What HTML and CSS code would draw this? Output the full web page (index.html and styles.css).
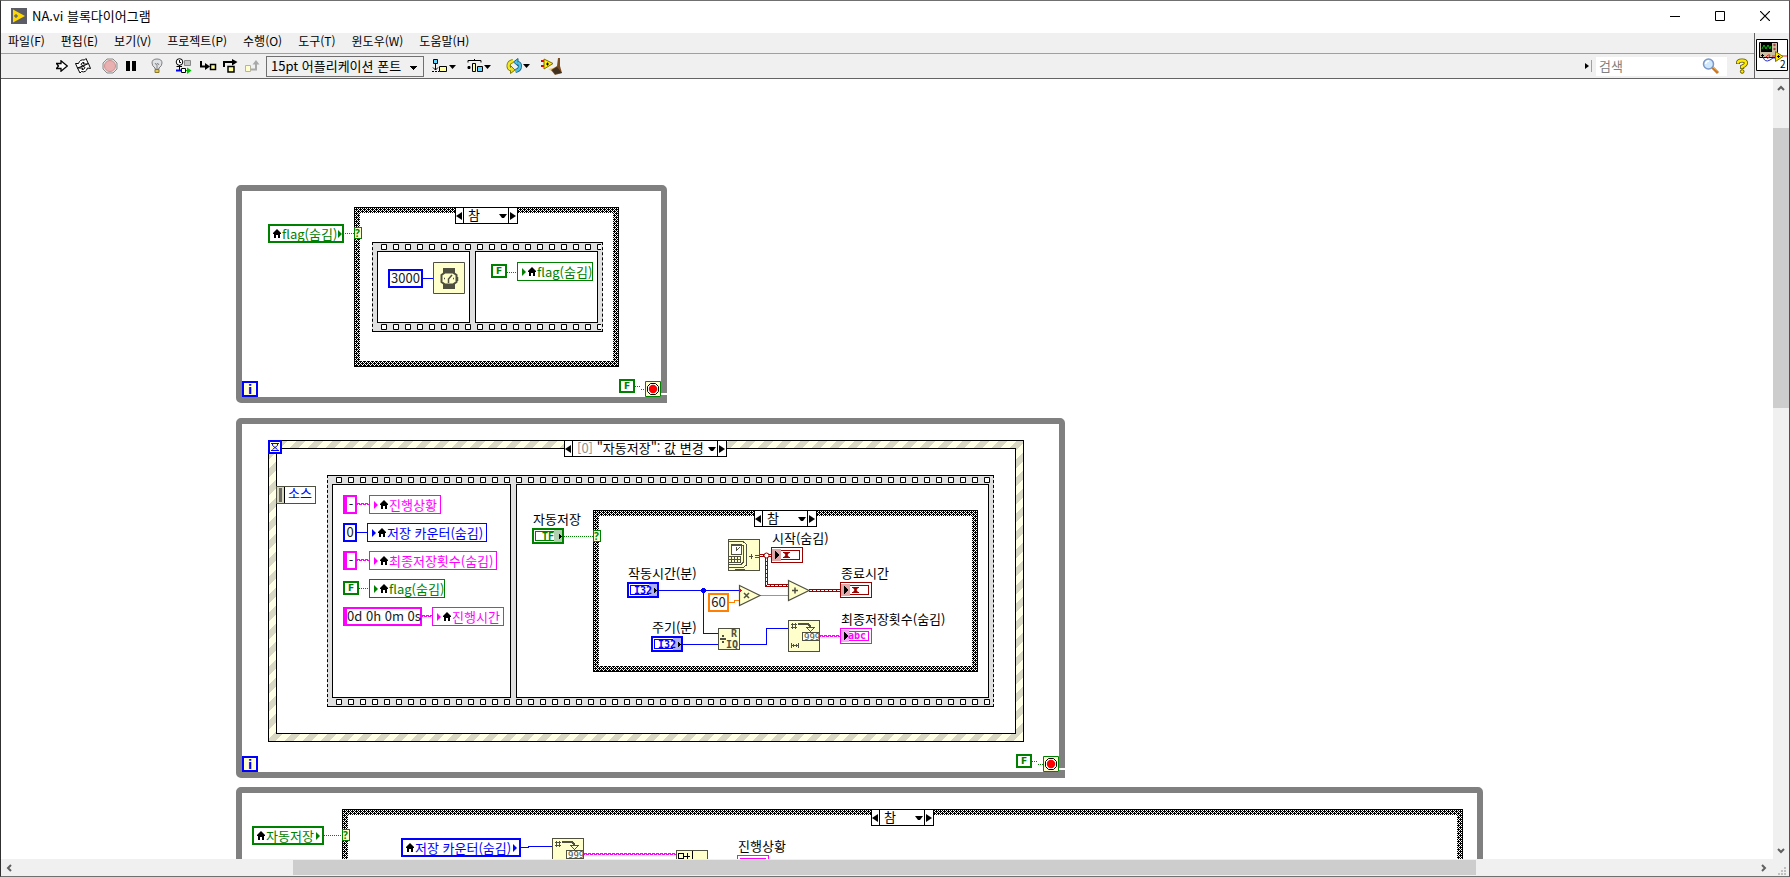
FILE: index.html
```html
<!DOCTYPE html>
<html lang="ko">
<head>
<meta charset="utf-8">
<title>NA.vi 블록다이어그램</title>
<link rel="stylesheet" href="styles.css">
</head>
<body>
<svg class="defs" aria-hidden="true">
  <defs>
    <symbol id="house" viewBox="0 0 8 9"><path d="M4 0L8 4V5H7V9H5V6H3V9H1V5H0V4Z" fill="#000"/></symbol>
    <symbol id="tri-r" viewBox="0 0 4 8"><path d="M0 0L4 4L0 8Z" fill="currentColor"/></symbol>
    <symbol id="case-l" viewBox="0 0 6 8"><path d="M6 0V8L0 4Z" fill="#000"/></symbol>
    <symbol id="case-r" viewBox="0 0 6 8"><path d="M0 0V8L6 4Z" fill="#000"/></symbol>
    <symbol id="drop" viewBox="0 0 8 4"><path d="M0 0H8L5 4H3Z" fill="#000"/></symbol>
    <symbol id="stop" viewBox="0 0 16 16"><path d="M.5 .5H15.5V15.5H.5Z" fill="#ffffcc" stroke="#008000"/><path d="M5.500 2.500H10.500L13.500 5.500V10.500L10.500 13.500H5.500L2.500 10.500V5.500Z" fill="#fff" stroke="#000"/><circle cx="8" cy="8" r="4.200" fill="#f00"/></symbol>
    <symbol id="fmt" viewBox="0 0 32 32"><path d="M.5 .5H31.500V31.500H.5Z" fill="#ffffcc" stroke="#505040"/><path d="M4.500 3V9M7.500 3V9M3 4.500H9M3 7.500H9" stroke="#505040" fill="none"/><path d="M10 4H19Q22 4 22.500 8" stroke="#505040" stroke-width="2" fill="none"/><path d="M18.500 7.500H26.500L22.500 11.500Z" fill="#ffffcc" stroke="#505040"/><path d="M14.500 12.500H31.500V20.500H14.500Z" fill="#fff" stroke="#505040"/><path d="M3.500 23V28M10.500 23V28M4 25.500H10M5.500 24V27M8.500 24V27" stroke="#505040" fill="none"/></symbol>
    <pattern id="film" width="12" height="6" patternUnits="userSpaceOnUse"><path d="M.5 .5H5.500V5.500H.5Z" fill="#fff" stroke="#000"/></pattern>
  </defs>
</svg>

<div class="window">
  <header class="titlebar">
    <svg class="app-icon" width="16" height="16" viewBox="0 0 16 16"><path d="M0 0H16V16H0Z" fill="#5c5c66"/><path d="M2 1.500L14 8L2 14.500Z" fill="#ffd800"/><path d="M3 8H7M5 6V10" stroke="#3c4a8c"/></svg>
    <h1 class="title">NA.vi 블록다이어그램</h1>
    <div class="winbtns">
      <button class="winbtn" aria-label="최소화"><svg width="10" height="10"><path d="M0 5.500H10" stroke="#000"/></svg></button>
      <button class="winbtn" aria-label="최대화"><svg width="10" height="10"><path d="M.5 .5H9.500V9.500H.5Z" fill="none" stroke="#000"/></svg></button>
      <button class="winbtn" aria-label="닫기"><svg width="10" height="10"><path d="M0 0L10 10M10 0L0 10" stroke="#000" stroke-width="1.200"/></svg></button>
    </div>
  </header>

  <div class="head">
    <div class="bars">
      <nav class="menubar">
        <button class="menu">파일(F)</button><button class="menu">편집(E)</button><button class="menu">보기(V)</button><button class="menu">프로젝트(P)</button><button class="menu">수행(O)</button><button class="menu">도구(T)</button><button class="menu">윈도우(W)</button><button class="menu">도움말(H)</button>
      </nav>
      <div class="toolbar">
        <button class="tool" aria-label="실행"><svg width="12" height="12"><path d="M.5 3.500H5V.800L11.300 6L5 11.200V8.500H.5L2.500 6Z" fill="#fff" stroke="#000" stroke-width="1.300"/></svg></button>
        <button class="tool g7" aria-label="반복 실행"><svg width="16" height="16" fill="#fff" stroke="#000"><path d="M3.500 5.500Q5 1 9.500 2L11 .5L13.500 6H8.500L9 4.500Q7 4 6 6.500L8 8L2.500 10L.500 5.500Z"/><path d="M12.500 10Q11 15 6.500 13.500L5 15L2.500 10L7.500 10L7 11.500Q9 12 10 9.500L8 8L13.500 5.500L15.500 10.500Z"/></svg></button>
        <button class="tool g11" aria-label="중단"><svg width="16" height="16"><path d="M5 1H11L15 5V11L11 15H5L1 11V5Z" fill="#e4e4e4" stroke="#8c8c8c"/><circle cx="8" cy="8" r="5.500" fill="#e8b0b0" stroke="#d09090"/></svg></button>
        <button class="tool g8" aria-label="일시정지"><svg width="10" height="12"><path d="M0 1H4V11H0ZM6 1H10V11H6Z" fill="#000"/></svg></button>
        <button class="tool g15" aria-label="실행 하이라이트"><svg width="12" height="16"><path d="M4 10Q1 8 1 5Q1 1 6 1Q11 1 11 5Q11 8 8 10V11H4Z" fill="#dfe2e6" stroke="#808080"/><path d="M4 5L5.500 7L6.500 5L8 7M6 7V10" stroke="#888" fill="none"/><path d="M4 11.500H8V14.500H4Z" fill="#e0c850" stroke="#887830"/></svg></button>
        <button class="tool g12" aria-label="와이어 값 유지"><svg width="17" height="16"><circle cx="4.500" cy="4" r="3.300" fill="#fff" stroke="#000"/><path d="M4.500 2V4.500H6M4.500 7V12M1.500 8.500H7" stroke="#000" fill="none"/><path d="M9.500 2.500H15.500V7.500H9.500Z" fill="#c4c4c4" stroke="#888"/><path d="M1 12.500H6" stroke="#00f" stroke-width="2"/><path d="M6.500 10.500H10.500V14.500H6.500Z" fill="#fff" stroke="#000"/><path d="M11 12.500H13" stroke="#0a0"/><path d="M12 9.500L16.500 12.500L12 16Z" fill="#00c000"/></svg></button>
        <button class="tool g8" aria-label="들어가기"><svg width="17" height="14"><path d="M1 2V7.500H6" stroke="#000" stroke-width="2" fill="none"/><path d="M5 4L10 7.500L5 11Z" fill="#000"/><path d="M10.500 5.500H15.500V10.500H10.500Z" fill="#ffff9c" stroke="#000" stroke-width="1.500"/></svg></button>
        <button class="tool g6" aria-label="건너뛰기"><svg width="15" height="14"><path d="M1 8V3H10" stroke="#000" stroke-width="2" fill="none"/><path d="M9 0L14.500 3L9 6.500Z" fill="#000"/><path d="M5 7.500H11V13H5Z" fill="#ffff9c" stroke="#000" stroke-width="1.500"/></svg></button>
        <button class="tool g6" aria-label="나가기"><svg width="16" height="14"><path d="M1.500 6.500H6.500V12.500H1.500Z" fill="#ffffd0" stroke="#b4b4a0"/><path d="M7 10.500H12V5" stroke="#a8a8a8" stroke-width="2" fill="none"/><path d="M8.500 5.500L12 1L15.500 5.500Z" fill="#a8a8a8"/></svg></button>
        <select class="font-select" aria-label="텍스트 설정"><option>15pt 어플리케이션 폰트</option></select>
        <button class="tool g8" aria-label="객체 정렬"><svg width="24" height="14"><path d="M1.500 .5H5.500V4.500H1.500Z" fill="#60d8ff" stroke="#000"/><path d="M3.500 5V11M1 8.500L3.500 11L6 8.500" stroke="#000" fill="none"/><path d="M0 12.500H7" stroke="#000" stroke-dasharray="2 1"/><path d="M7.500 7.500H14.500V12.500H7.500Z" fill="#ffffa0" stroke="#000"/><path d="M17 6H24L20.500 10Z" fill="#000"/></svg></button>
        <button class="tool g11" aria-label="객체 분배"><svg width="24" height="14"><path d="M1 3.500V1.500H14V3.500M7.500 1V0" stroke="#000" fill="none"/><path d="M1 7.500H3V9.500H1Z" stroke="#000"/><path d="M5.500 4.500H8.500V12.500H5.500Z" fill="#ffffa0" stroke="#000"/><path d="M10.500 7.500H15.500V12.500H10.500Z" fill="#60d8ff" stroke="#000"/><path d="M17 6H24L20.500 10Z" fill="#000"/></svg></button>
        <button class="tool g14" aria-label="순서 재설정"><svg width="25" height="16" fill="none"><path d="M8 3Q3.500 4 3.500 8Q3.500 10.500 6 11.500" stroke="#807800" stroke-width="4"/><path d="M5.500 7.500L10 12L5.500 15.500Z" fill="#e8e020" stroke="#807800"/><path d="M8 3Q3.500 4 3.500 8Q3.500 10.500 6 11.500" stroke="#f0e828" stroke-width="2.400"/><path d="M10.500 13Q15 12 15 8Q15 5.500 12.500 4.500" stroke="#186088" stroke-width="4"/><path d="M13 .5V8L8.500 4Z" fill="#50c0e0" stroke="#186088"/><path d="M10.500 13Q15 12 15 8Q15 5.500 12.500 4.500" stroke="#50c0e0" stroke-width="2.400"/><path d="M18 6H25L21.500 10Z" fill="#000"/></svg></button>
        <button class="tool g11" aria-label="다이어그램 정리"><svg width="22" height="17"><path d="M0 3H3M0 8H3" stroke="#e00000" stroke-width="2"/><path d="M7 11L14 9.500L16 13L12 14Z" fill="#f0c878"/><path d="M3 1L12 5.500L3 11Z" fill="#fff000" stroke="#806800"/><path d="M5 6H8M6.500 4.500V7.500" stroke="#000"/><path d="M17 0H19V8L21 15L14 17L10 12L16 8Z" fill="#7c4c20"/><path d="M11 12L16 9L21 15L14 16Z" fill="#403020"/></svg></button>
        <div class="searchbox">
          <svg width="8" height="12"><path d="M1 3L5 6L1 9Z" fill="#000"/><path d="M7.500 0V12" stroke="#a0a0a0"/></svg>
          <label class="search"><input class="search-input" type="text" placeholder="검색" aria-label="검색"><svg width="18" height="17"><path d="M10 9L16 15" stroke="#c87828" stroke-width="3"/><path d="M11 9L17 14" stroke="#f4b860" stroke-width="1"/><circle cx="6.500" cy="6" r="5" fill="#d0e8fc" stroke="#7c98c8" stroke-width="1.500"/><path d="M3.500 6Q4 3 7 3" stroke="#fff" stroke-width="1.500" fill="none"/></svg></label>
          <button class="tool" aria-label="도움말"><svg width="12" height="16"><path d="M2 6V5Q2 2.500 6 2.500Q10 2.500 10 5Q10 7 6.200 8.500V11" stroke="#5c5400" stroke-width="4" fill="none"/><path d="M2 5.500V5Q2 2.500 6 2.500Q10 2.500 10 5Q10 7 6.200 8.500V10.300" stroke="#ffec00" stroke-width="2.400" fill="none"/><circle cx="6.200" cy="13.500" r="1.800" fill="#ffec00" stroke="#5c5400"/></svg></button>
        </div>
      </div>
    </div>
    <div class="vi-icon">
      <svg width="32" height="32" viewBox="0 0 32 32"><path d="M.5 .5H31.500V31.500H.5Z" fill="#fff" stroke="#000"/><path d="M3.500 3.500H21.500V18.500H3.500Z" fill="#c8c0a0" stroke="#000"/><path d="M5 4H16V13H5Z" fill="#000"/><path d="M6 10L8 6L10 10L12 6L14 10L15 7" stroke="#00c000" fill="none"/><circle cx="18.500" cy="6" r="1.200" fill="#a04040"/><circle cx="18.500" cy="10" r="1.200" fill="#a04040"/><path d="M5 16.500H8M6.500 15V18" stroke="#000"/><path d="M7 18Q9 24 14 21Q17 18 20 19" stroke="#2030c0" fill="none"/><path d="M10 18Q12 15 14 16Q12 21 11 19M16 17H31" stroke="#f02020" fill="none"/><path d="M19.500 12.500L27 17.500L19.500 22.500Z" fill="#ffe800" stroke="#807000"/><path d="M21 17.500H24M22.500 16V19" stroke="#000"/><text class="vi-num" x="24" y="29">2</text></svg>
    </div>
  </div>

  <div class="workarea">
    <main class="canvas">
      <div class="sheet">
        <section class="loop loop-a"></section>
        <section class="loop loop-b"></section>
        <section class="loop loop-c"></section>
        <div class="case case-a"></div>
        <div class="event"></div>
        <div class="seq seq-a"><div class="frame fa1"></div><div class="frame fa2"></div></div>
        <div class="seq seq-b"><div class="frame fb1"></div><div class="frame fb2"></div></div>
        <div class="case case-b"></div>
        <div class="case case-c"></div>

        <svg class="wires" width="1790" height="877" shape-rendering="crispEdges" fill="none">
          <g class="films">
            <svg x="381" y="244" width="220" height="6"><rect width="220" height="6" fill="url(#film)"/></svg>
            <svg x="381" y="324" width="220" height="6"><rect width="220" height="6" fill="url(#film)"/></svg>
            <svg x="336" y="477" width="654" height="6"><rect width="654" height="6" fill="url(#film)"/></svg>
            <svg x="336" y="699" width="654" height="6"><rect width="654" height="6" fill="url(#film)"/></svg>
          </g>
          <path d="M660 394H668M1058 769H1066" stroke="#fff" stroke-width="2"/>
          <g stroke="#008000" stroke-dasharray="1 1">
            <path d="M345 233.500H354M507 272.500H517M635 386.500H641M641 389.500H645M359 588.500H369M564 536.500H593M1032 761.500H1038M1038 764.500H1043M324 835.500H342"/>
          </g>
          <g stroke="#0000ff">
            <path d="M423 278.500H433M357 532.500H367M659 590.500H739M703.500 590V633.500H718M683 644.500H718M740 644.500H766.500V628.500H788M521 847.500H528V846.500H552"/>
          </g>
          <circle cx="703.500" cy="590.500" r="2.500" fill="#0000ff"/>
          <g stroke="#ff8000"><path d="M729 602.500H734.500V600.500H739M760 595.500H788"/></g>
          <g stroke="#ff00ff" stroke-dasharray="3 1">
            <path d="M357 503.500H369M357 559.500H369M422 615.500H432M820 635.500H840M584 853.500H676"/>
            <path stroke-dashoffset="2" d="M357 504.500H369M357 560.500H369M422 616.500H432M820 636.500H840M584 854.500H676"/>
          </g>
          <g stroke="#990000" stroke-width="3"><path d="M760 555.500H771M766.500 555V585.500H788M809 590.500H840"/></g>
          <g stroke="#fff" stroke-dasharray="3 1"><path d="M760 555.500H771M766.500 558V585.500H788M809 590.500H840"/></g>
          <circle cx="766.500" cy="555.500" r="2.500" fill="#fff" stroke="#990000" shape-rendering="auto"/>

          <g fill="#ffffcc" stroke="#008000"><path d="M354.500 227.500H361.500V238.500H354.500Z"/><path d="M593.500 530.500H600.500V541.500H593.500Z"/><path d="M342.500 829.500H349.500V840.500H342.500Z"/></g>
          <g class="tiny green"><text x="355" y="237">?</text><text x="594" y="540">?</text><text x="343" y="839">?</text></g>

          <!-- wait -->
          <g shape-rendering="auto"><path d="M433.500 262.500H464.500V293.500H433.500Z" fill="#ffffcc" stroke="#505040"/><path d="M443 268H455V274H443ZM443 283H455V289H443Z" fill="#505040"/><path d="M445 272.500H453L456.500 275V282L453 284.500H445L441.500 282V275Z" fill="#ffffcc" stroke="#505040" stroke-width="2"/><path d="M448.500 283V279L452 275M457.500 277V281M444 278.500H445M453 278.500H454" stroke="#505040" stroke-width="1.500"/></g>

          <!-- loop stop and iteration terminals -->
          <g shape-rendering="auto"><use href="#stop" x="645" y="381" width="16" height="16"/><use href="#stop" x="1043" y="756" width="16" height="16"/></g>
          <g fill="#ffffcc" stroke="#0000ff" stroke-width="2"><path d="M243 382H257V396H243Z"/><path d="M243 757H257V771H243Z"/><path d="M269 441H281V453H269Z"/></g>
          <g class="iter"><text x="248" y="394">i</text><text x="248" y="769">i</text></g>
          <path d="M271 443.500H279M271 450.500H279M272.500 444V445.500L277.500 449.500M277.500 444V445.500L272.500 449.500" stroke="#0000ff" shape-rendering="auto"/>

          <!-- event data node -->
          <path d="M276.500 486.500H315.500V503.500H276.500Z" fill="#fff" stroke="#505040"/><path d="M277 487H284V503H277Z" fill="#d8d8c0"/><path d="M279 488H282V502H279Z" fill="#6c6864"/><path d="M284.500 487V503" stroke="#000"/>

          <!-- get date/time -->
          <path d="M728.500 539.500H759.500V570.500H728.500Z" fill="#ffffcc" stroke="#505040"/>
          <g stroke="#505040"><path d="M729 541.500H743L746.500 544.500V565L743 567.500H729M729 564.500H741L743.500 562V546L741 544.500H731"/><path d="M731.500 545.500H741.500V554.500H731.500Z" fill="#fff"/><path d="M736.500 547V551M737 550L740 547M729 556.500H740M729 559.500H740M729 562.500H740M731.500 556V563M734.500 556V563M737.500 556V563M740.500 556V563M735 569.500H745M749 556.500H753M751.500 554V559M755 555.500H759M755 557.500H759"/></g>

          <!-- arithmetic -->
          <g shape-rendering="auto" fill="#ffffcc" stroke="#505040" stroke-width="1.200"><path d="M739.500 585.500L760 595.500L739.500 605.500Z"/><path d="M788.500 580.500L809 590.500L788.500 600.500Z"/><path d="M744 593L749 598M749 593L744 598M792 590.500H798M795 587.500V593.500" stroke-width="1.500"/></g>
          <path d="M739 588L742 590.500L739 593Z" fill="#ff0000"/>
          <path d="M718.500 628.500H739.500V649.500H718.500Z" fill="#ffffcc" stroke="#505040"/>
          <path d="M720 639H726M722 636H724M722 642H724" stroke="#505040" stroke-width="2"/>
          <g class="code olive"><text x="731" y="637">R</text><text x="726" y="648">IQ</text></g>

          <!-- number to string -->
          <use href="#fmt" x="788" y="620" width="32" height="32"/>
          <use href="#fmt" x="552" y="838" width="32" height="32"/>
          <g class="code-sm olive"><text x="804" y="640">999</text><text x="568" y="858">999</text></g>
          <path d="M676.500 850.500H707.500V881.500H676.500Z" fill="#ffffcc" stroke="#505040"/><path d="M678.500 853.500H683.500V858.500H678.500ZM684 856.500H690M687.500 853V860M692.500 851V877" stroke="#000"/>

          <!-- control and indicator terminals -->
          <g stroke="#008000"><path d="M533 529H563V543H533Z" stroke-width="2" fill="#fff"/><path d="M535.500 531.500H561.500V540.500H535.500Z"/></g>
          <path d="M554 530H562V542H554Z" fill="#b0d0b0"/><path d="M559 533V540L562 536.500Z" fill="#000"/>
          <g stroke="#0000ff"><path d="M628 583H658V597H628Z" stroke-width="2" fill="#fff"/><path d="M630.500 585.500H656.500V594.500H630.500Z"/><path d="M652 637H682V651H652Z" stroke-width="2" fill="#fff"/><path d="M654.500 639.500H680.500V648.500H654.500Z"/></g>
          <path d="M649 584H657V596H649ZM673 638H681V650H673Z" fill="#b0b0f8"/><path d="M654 587V594L657 590.500ZM678 641V648L681 644.500Z" fill="#000"/>
          <g stroke="#990000" fill="#fff"><path d="M771.500 547.500H802.500V562.500H771.500Z"/><path d="M774.500 550.500H799.500V559.500H774.500Z"/><path d="M840.500 582.500H871.500V597.500H840.500Z"/><path d="M843.500 585.500H868.500V594.500H843.500Z"/></g>
          <path d="M772 549H781V561H772ZM841 584H850V596H841Z" fill="#e0a8a8"/><path d="M775 551V559L779 555ZM844 586V594L848 590Z" fill="#000"/>
          <path d="M783 552H790V553H789L787.500 555L789 557H790V558H783V557H784L785.500 555L784 553H783ZM852 587H859V588H858L856.500 590L858 592H859V593H852V592H853L854.500 590L853 588H852Z" fill="#990000" shape-rendering="auto"/>
          <g stroke="#ff00ff" fill="#fff"><path d="M840.500 628.500H871.500V643.500H840.500Z"/><path d="M843.500 631.500H868.500V640.500H843.500Z"/><path d="M737.500 855.500H768.500V870.500H737.500Z"/><path d="M740.500 858.500H765.500V867.500H740.500Z"/></g>
          <path d="M841 630H849V642H841Z" fill="#f8a8f8"/><path d="M844 632V640L848 636Z" fill="#000"/>
          <g class="code"><text class="green" x="542" y="540">TF</text><text class="blue" x="634" y="594">I32</text><text class="blue" x="658" y="648">I32</text><text class="pink" x="848" y="639">abc</text></g>
        </svg>

        <button class="selector sel-a"><svg class="end" width="6" height="8"><use href="#case-l"/></svg><span class="sel-text">참</span><svg class="drop" width="8" height="4"><use href="#drop"/></svg><svg class="end last" width="6" height="8"><use href="#case-r"/></svg></button>
        <button class="selector sel-b"><svg class="end" width="6" height="8"><use href="#case-l"/></svg><span class="sel-text"><span class="dim">[0]</span> "자동저장": 값 변경</span><svg class="drop" width="8" height="4"><use href="#drop"/></svg><svg class="end last" width="6" height="8"><use href="#case-r"/></svg></button>
        <button class="selector sel-c"><svg class="end" width="6" height="8"><use href="#case-l"/></svg><span class="sel-text">참</span><svg class="drop" width="8" height="4"><use href="#drop"/></svg><svg class="end last" width="6" height="8"><use href="#case-r"/></svg></button>
        <button class="selector sel-d"><svg class="end" width="6" height="8"><use href="#case-l"/></svg><span class="sel-text">참</span><svg class="drop" width="8" height="4"><use href="#drop"/></svg><svg class="end last" width="6" height="8"><use href="#case-r"/></svg></button>

        <div class="local read green n-flag-read"><svg width="8" height="9"><use href="#house"/></svg><span class="txt">flag(숨김)</span><svg class="out" width="4" height="8"><use href="#tri-r"/></svg></div>
        <div class="local read green n-auto-read"><svg width="8" height="9"><use href="#house"/></svg><span class="txt">자동저장</span><svg class="out" width="4" height="8"><use href="#tri-r"/></svg></div>
        <div class="local read blue n-count-read"><svg width="8" height="9"><use href="#house"/></svg><span class="txt">저장 카운터(숨김)</span><svg class="out" width="4" height="8"><use href="#tri-r"/></svg></div>

        <div class="local green n-flag-a"><svg width="4" height="8"><use href="#tri-r"/></svg><svg class="home" width="8" height="9"><use href="#house"/></svg><span class="txt">flag(숨김)</span></div>
        <div class="local pink n-status"><svg width="4" height="8"><use href="#tri-r"/></svg><svg class="home" width="8" height="9"><use href="#house"/></svg><span class="txt">진행상황</span></div>
        <div class="local blue n-count"><svg width="4" height="8"><use href="#tri-r"/></svg><svg class="home" width="8" height="9"><use href="#house"/></svg><span class="txt">저장 카운터(숨김)</span></div>
        <div class="local pink n-last"><svg width="4" height="8"><use href="#tri-r"/></svg><svg class="home" width="8" height="9"><use href="#house"/></svg><span class="txt">최종저장횟수(숨김)</span></div>
        <div class="local green n-flag-b"><svg width="4" height="8"><use href="#tri-r"/></svg><svg class="home" width="8" height="9"><use href="#house"/></svg><span class="txt">flag(숨김)</span></div>
        <div class="local pink n-time"><svg width="4" height="8"><use href="#tri-r"/></svg><svg class="home" width="8" height="9"><use href="#house"/></svg><span class="txt">진행시간</span></div>

        <div class="const c-int k-3000">3000</div>
        <div class="const c-str k-dash1">-</div>
        <div class="const c-int k-zero">0</div>
        <div class="const c-str k-dash2">-</div>
        <div class="const c-str k-dur">0d 0h 0m 0s</div>
        <div class="const c-dbl k-60">60</div>
        <div class="bool b-1">F</div>
        <div class="bool b-2">F</div>
        <div class="bool b-3">F</div>
        <div class="bool b-4">F</div>

        <span class="label blue l-src">소스</span>
        <span class="label l-auto">자동저장</span>
        <span class="label l-start">시작(숨김)</span>
        <span class="label l-run">작동시간(분)</span>
        <span class="label l-end">종료시간</span>
        <span class="label l-period">주기(분)</span>
        <span class="label l-last">최종저장횟수(숨김)</span>
        <span class="label l-status">진행상황</span>
      </div>
    </main>
    <div class="vscroll">
      <button class="sbtn" aria-label="위로"><svg width="8" height="6"><path d="M1 5L4 2L7 5" stroke="#606060" stroke-width="2" fill="none"/></svg></button>
      <div class="track-v"><div class="thumb-v"></div></div>
      <button class="sbtn" aria-label="아래로"><svg width="8" height="6"><path d="M1 1L4 4L7 1" stroke="#606060" stroke-width="2" fill="none"/></svg></button>
    </div>
  </div>
  <div class="hscroll">
    <button class="sbtn" aria-label="왼쪽으로"><svg width="6" height="8"><path d="M5 1L2 4L5 7" stroke="#606060" stroke-width="2" fill="none"/></svg></button>
    <div class="track-h"><div class="thumb-h"></div></div>
    <button class="sbtn" aria-label="오른쪽으로"><svg width="6" height="8"><path d="M1 1L4 4L1 7" stroke="#606060" stroke-width="2" fill="none"/></svg></button>
    <svg class="grip" width="8" height="8" fill="#c0c0c0"><path d="M0 6H2V8H0ZM3 6H5V8H3ZM6 6H8V8H6ZM3 3H5V5H3ZM6 3H8V5H6ZM6 0H8V2H6Z"/></svg>
  </div>
</div>
</body>
</html>
```
FILE: styles.css
```css
* { box-sizing: border-box; }
html, body { height: 100%; }
body {
  margin: 0;
  background: #fff;
  color: #000;
  font: 12px/18px "Noto Sans CJK KR", sans-serif;
}
button, input, select { font: inherit; color: inherit; }
button { margin: 0; padding: 0; border: 0; background: none; }
svg { display: block; flex: none; }
.defs { position: absolute; width: 0; height: 0; }

.window {
  display: flex;
  flex-direction: column;
  height: 100%;
  border: 1px solid #707070;
  border-left-color: #303030;
  border-right-color: #505050;
}

.titlebar { display: flex; align-items: center; height: 32px; flex: none; padding: 0 2px 2px 10px; }
.title { margin: 0 0 0 5px; font-size: 13px; font-weight: 400; line-height: 18px; }
.winbtns { display: flex; margin-left: auto; height: 100%; }
.winbtn { display: flex; align-items: center; justify-content: center; width: 45px; }

.head { display: flex; flex: none; background: #f0f0f0; border-bottom: 1px solid #646464; }
.bars { flex: 1; }
.menubar { display: flex; gap: 16px; height: 21px; padding-left: 7px; border-bottom: 1px solid #a0a0a0; }
.menu { line-height: 16px; height: 16px; white-space: nowrap; }
.toolbar { display: flex; align-items: center; height: 24px; padding-left: 55px; }
.g6 { margin-left: 6px; }
.g7 { margin-left: 7px; }
.g8 { margin-left: 8px; }
.g11 { margin-left: 11px; }
.g12 { margin-left: 12px; }
.g14 { margin-left: 14px; }
.g15 { margin-left: 15px; }
.font-select {
  width: 158px;
  height: 21px;
  margin-left: 6px;
  padding: 0 15px 2px 4px;
  border: 1px solid #707070;
  border-radius: 0;
  appearance: none;
  font-size: 13px;
  background: linear-gradient(#000, #000) 143px 9px / 7px 1px no-repeat,
    linear-gradient(#000, #000) 144px 10px / 5px 1px no-repeat,
    linear-gradient(#000, #000) 145px 11px / 3px 1px no-repeat,
    linear-gradient(#000, #000) 146px 12px / 1px 1px no-repeat, #f0f0f0;
}
.searchbox { display: flex; align-items: center; margin-left: auto; padding-right: 6px; }
.search { display: flex; align-items: center; width: 131px; height: 19px; margin: 0 9px 0 4px; padding-right: 7px; background: #fff; }
.search-input { flex: 1; min-width: 0; height: 19px; padding: 0 3px 1px; border: 0; background: none; outline: 0; font-size: 13px; }
.search-input::placeholder { color: #808080; opacity: 1; }
.vi-icon { display: flex; align-items: center; width: 35px; padding-left: 1px; padding-bottom: 1px; border-left: 1px solid #646464; }
.vi-num { font: 10px "Noto Sans CJK KR", sans-serif; }

.workarea { display: flex; flex: 1; min-height: 0; }
.canvas { position: relative; flex: 1; overflow: hidden; background: #fff; }
.sheet { position: absolute; left: -1px; top: -79px; width: 1790px; height: 1000px; font-size: 13px; }
.vscroll { display: flex; flex-direction: column; width: 16px; background: #f0f0f0; }
.sbtn { display: flex; align-items: center; justify-content: center; width: 15px; height: 17px; flex: none; }
.track-v { flex: 1; padding-top: 32px; }
.thumb-v { height: 280px; background: #cdcdcd; }
.hscroll { display: flex; align-items: center; height: 17px; flex: none; background: #f0f0f0; }
.track-h { flex: 1; height: 15px; padding: 0 280px 0 277px; }
.thumb-h { height: 15px; background: #cdcdcd; }
.grip { margin: 6px 3px 0 7px; }

/* Structures */
.loop, .case, .event, .seq, .frame, .wires, .selector, .local, .const, .bool, .label { position: absolute; }
.loop { border: 6px solid #808080; border-radius: 5px; }
.loop-a { left: 236px; top: 185px; width: 431px; height: 218px; border-bottom-right-radius: 0; }
.loop-b { left: 236px; top: 418px; width: 829px; height: 360px; border-bottom-right-radius: 0; }
.loop-c { left: 236px; top: 787px; width: 1247px; height: 400px; }

.case {
  border: 1px solid #000;
  padding: 5px;
  background:
    linear-gradient(#fff, #fff) content-box,
    conic-gradient(from 90deg at 3px 3px, #000 25%, transparent 0) 0 0 / 4px 4px,
    conic-gradient(from 90deg at 3px 3px, #000 25%, transparent 0) 2px 2px / 4px 4px,
    conic-gradient(#000 25%, #fff 0 50%, #000 0 75%, #fff 0) 0 0 / 2px 2px;
}
.case-a { left: 354px; top: 207px; width: 265px; height: 160px; }
.case-b { left: 593px; top: 510px; width: 385px; height: 162px; }
.case-c { left: 342px; top: 809px; width: 1121px; height: 300px; }

.event {
  left: 268px; top: 440px; width: 756px; height: 302px;
  border: 1px solid #000;
  background: linear-gradient(135deg, #ffffe6 25%, #d8d8c4 25% 50%, #ffffe6 50% 75%, #d8d8c4 75%) 0 0 / 18px 18px;
}
.event::before { content: ""; position: absolute; inset: 7px; border: 1px solid #000; background: #fff; }

.seq { border: 1px solid #000; border-left-style: dashed; border-right-style: dashed; background: #e0e0e0; }
.seq-a { left: 372px; top: 242px; width: 231px; height: 90px; }
.seq-b { left: 327px; top: 475px; width: 667px; height: 232px; }
.frame { top: 8px; bottom: 8px; border: 1px solid #000; background: #fff; }
.fa1 { left: 4px; width: 93px; }
.fa2 { left: 102px; right: 4px; }
.fb1 { left: 4px; width: 179px; }
.fb2 { left: 188px; right: 4px; }

.wires { left: 0; top: 0; }

.selector { display: flex; align-items: center; height: 17px; border: 1px solid #000; background: #fff; line-height: 13px; white-space: nowrap; }
.selector .end { margin-right: 1px; }
.selector .last { margin: 0 1px 0 auto; }
.selector .drop { margin-right: 3px; }
.sel-text { flex: 1; height: 15px; padding-left: 4px; border-left: 1px solid #000; text-align: left; }
.selector::after { content: ""; position: absolute; right: 8px; top: 0; bottom: 0; border-left: 1px solid #000; }
.dim { color: #909090; }
.sel-a { left: 455px; top: 207px; width: 63px; }
.sel-b { left: 564px; top: 440px; width: 163px; }
.sel-c { left: 754px; top: 510px; width: 63px; }
.sel-d { left: 871px; top: 809px; width: 63px; }

/* Nodes */
.green { color: #008000; fill: #008000; }
.blue { color: #0000ff; fill: #0000ff; }
.pink { color: #ff00ff; fill: #ff00ff; }
.olive { fill: #505040; }
.local { display: flex; align-items: center; height: 19px; padding-left: 4px; border: 1px solid; background: #fff; line-height: 15px; white-space: nowrap; }
.local .home { margin: 0 1px 0 2px; }
.local.read { padding: 0 2px 0 3px; border-width: 2px; gap: 1px; line-height: 13px; }
.txt { padding-bottom: 1px; }
.out { margin-left: auto; }
.n-flag-read { left: 268px; top: 224px; width: 76px; }
.n-auto-read { left: 252px; top: 826px; width: 72px; }
.n-count-read { left: 401px; top: 838px; width: 120px; }
.n-flag-a { left: 517px; top: 262px; width: 76px; }
.n-status { left: 369px; top: 495px; width: 72px; }
.n-count { left: 367px; top: 523px; width: 120px; }
.n-last { left: 369px; top: 551px; width: 128px; }
.n-flag-b { left: 369px; top: 579px; width: 76px; }
.n-time { left: 432px; top: 607px; width: 72px; }

.const { height: 19px; border: 2px solid; background: #fff; color: #202020; line-height: 14px; text-align: center; white-space: nowrap; }
.c-int { border-color: #0000ff; }
.c-str { border-color: #ff00ff; border-left-width: 4px; }
.c-dbl { border-color: #ff8000; }
.k-3000 { left: 388px; top: 269px; width: 35px; }
.k-dash1 { left: 343px; top: 495px; width: 14px; }
.k-zero { left: 343px; top: 523px; width: 14px; }
.k-dash2 { left: 343px; top: 551px; width: 14px; }
.k-dur { left: 343px; top: 607px; width: 79px; }
.k-60 { left: 708px; top: 593px; width: 21px; }

.bool { width: 16px; height: 14px; border: 2px solid #008000; background: #fff; color: #008000; font: bold 9px/10px "DejaVu Sans", sans-serif; text-align: center; }
.b-1 { left: 491px; top: 264px; }
.b-2 { left: 619px; top: 379px; }
.b-3 { left: 343px; top: 581px; }
.b-4 { left: 1016px; top: 754px; }

.label { line-height: 18px; white-space: nowrap; }
.l-src { left: 288px; top: 484px; }
.l-auto { left: 533px; top: 510px; }
.l-start { left: 772px; top: 529px; }
.l-run { left: 628px; top: 564px; }
.l-end { left: 841px; top: 564px; }
.l-period { left: 652px; top: 618px; }
.l-last { left: 841px; top: 610px; }
.l-status { left: 738px; top: 837px; }

.tiny { font: bold 10px "Noto Sans", sans-serif; }
.iter { font: bold 12px "DejaVu Sans", sans-serif; fill: #0000ff; stroke: none; }
.code { font: bold 10px "DejaVu Sans Mono", monospace; }
.code-sm { font: 9px "DejaVu Sans Mono", monospace; }
```
